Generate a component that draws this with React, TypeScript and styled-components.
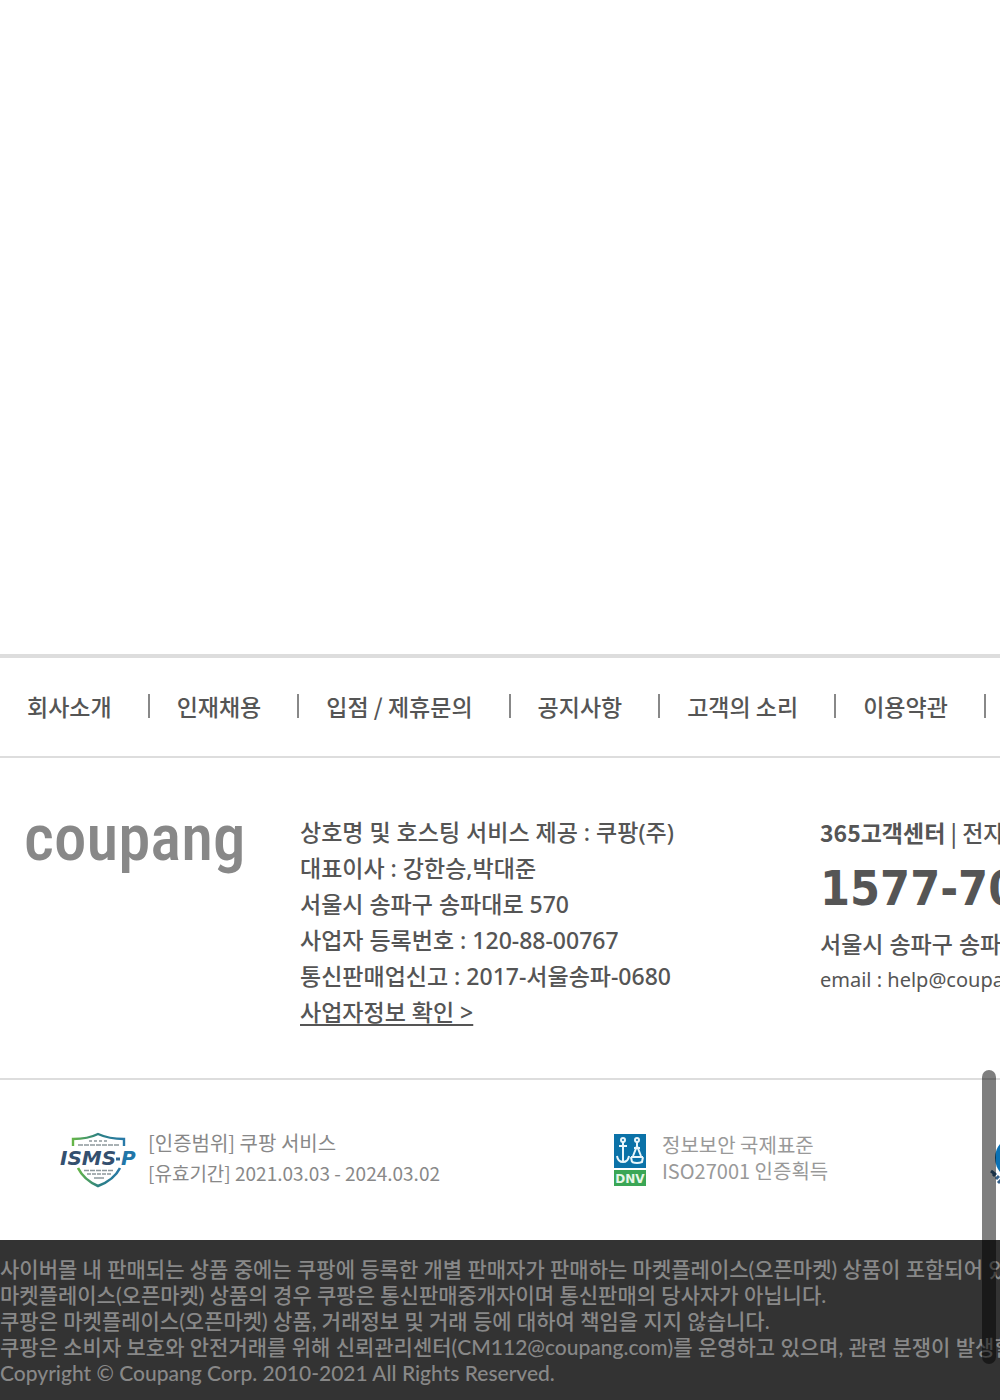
import React from 'react';
import styled, { createGlobalStyle } from 'styled-components';

const GlobalStyle = createGlobalStyle`
  * { box-sizing: border-box; }
  body {
    margin: 0;
    background: #fff;
    color: #555;
    font-family: "Noto Sans", "Noto Sans CJK KR", sans-serif;
    font-size: 23px;
    font-weight: 500;
    line-height: 36px;
  }
  a { color: inherit; text-decoration: none; }
  ul, p, address { margin: 0; padding: 0; font-style: normal; }
`;

const Page = styled.div`
  display: flex;
  flex-direction: column;
  min-height: 100vh;
  overflow: hidden;
  white-space: nowrap;
`;

const Content = styled.main`
  flex: 1;
`;

const Footer = styled.footer`
  border-top: 4px solid #ddd;
`;

const Nav = styled.nav`
  padding: 30px 0 32px;
  border-bottom: 2px solid #ddd;
  font-family: "Noto Sans CJK KR", sans-serif;
`;

const NavList = styled.ul`
  display: flex;
  list-style: none;
`;

const NavItem = styled.li`
  display: flex;
  flex: none;
  align-items: center;
  padding-left: 27px;

  &:not(:last-child)::after {
    content: "";
    width: 2px;
    height: 24px;
    margin-left: 36px;
    background: #888;
  }
`;

const Info = styled.section`
  display: grid;
  grid-template-columns: 300px 520px 1fr;
  padding: 56px 0 48px;
  border-bottom: 2px solid #ddd;
`;

const LogoLink = styled.a`
  display: block;
  padding-left: 24px;
`;

const Company = styled.address`
  a { text-decoration: underline; text-decoration-thickness: 2px; text-underline-offset: 3px; }
`;

const ContactTitle = styled.p`
  font-family: "Noto Sans CJK KR", sans-serif;
`;

const Phone = styled.strong`
  display: block;
  font: bold 48px/76px "DejaVu Sans Condensed", "DejaVu Sans", sans-serif;
`;

const Email = styled.a`
  display: block;
  font-size: 20px;
  font-weight: 400;
`;

const Certs = styled.section`
  display: grid;
  grid-template-columns: 554px 376px auto;
  align-items: center;
  height: 160px;
  padding-left: 60px;
`;

const Cert = styled.div<{ $gap: number }>`
  display: flex;
  align-items: center;
  gap: ${(p) => p.$gap}px;
`;

const CertText = styled.div<{ $line: number; $color: string }>`
  padding-bottom: 4px;
  font-family: "Noto Sans CJK KR", sans-serif;
  font-size: 20px;
  font-weight: 400;
  line-height: ${(p) => p.$line}px;
  color: ${(p) => p.$color};
`;

const Period = styled.p`
  font-size: 19px;
`;

const Legal = styled.section`
  padding: 16px 0 14px;
  background: #333;
  color: #888;
  font-family: Lato, "Noto Sans CJK KR", sans-serif;
  font-size: 21px;
  line-height: 26px;
`;

const ScrollThumb = styled.div`
  position: fixed;
  right: 4px;
  bottom: 36px;
  width: 14px;
  height: 21vh;
  border-radius: 7px;
  background: rgba(0, 0, 0, 0.5);
`;

const navLinks = ['회사소개', '인재채용', '입점 / 제휴문의', '공지사항', '고객의 소리', '이용약관', '개인정보 처리방침'];

const companyLines = [
  '상호명 및 호스팅 서비스 제공 : 쿠팡(주)',
  '대표이사 : 강한승,박대준',
  '서울시 송파구 송파대로 570',
  '사업자 등록번호 : 120-88-00767',
  '통신판매업신고 : 2017-서울송파-0680',
];

const legalLines = [
  '사이버몰 내 판매되는 상품 중에는 쿠팡에 등록한 개별 판매자가 판매하는 마켓플레이스(오픈마켓) 상품이 포함되어 있습니다.',
  '마켓플레이스(오픈마켓) 상품의 경우 쿠팡은 통신판매중개자이며 통신판매의 당사자가 아닙니다.',
  '쿠팡은 마켓플레이스(오픈마켓) 상품, 거래정보 및 거래 등에 대하여 책임을 지지 않습니다.',
  '쿠팡은 소비자 보호와 안전거래를 위해 신뢰관리센터(CM112@coupang.com)를 운영하고 있으며, 관련 분쟁이 발생할 경우 별도의 분쟁 처리절차에 의거 분쟁이 처리됩니다.',
  'Copyright © Coupang Corp. 2010-2021 All Rights Reserved.',
];

const CoupangLogo = () => (
  <svg width="230" height="64" viewBox="0 0 230 64" role="img" aria-label="coupang">
    <text x="0" y="46" fontFamily="'Roboto Condensed', Roboto, sans-serif" fontSize="65" fontWeight="500" fill="#888">coupang</text>
  </svg>
);

const IsmsMark = () => (
  <svg width="78" height="56" viewBox="0 0 78 56" role="img" aria-label="ISMS-P">
    <defs>
      <linearGradient id="shield">
        <stop offset="0" stopColor="#65b548" />
        <stop offset="0.5" stopColor="#2c8083" />
        <stop offset="1" stopColor="#2879a8" />
      </linearGradient>
    </defs>
    <path d="M13 14V7Q28 7 38 2Q49 7 64 7V14" fill="none" stroke="url(#shield)" strokeWidth="2.4" />
    <path d="M18 36Q24 48 38 54Q54 48 60 36" fill="none" stroke="url(#shield)" strokeWidth="2.6" />
    <g stroke="#8d989c" strokeWidth="1.5">
      <path d="M29 9H49" strokeDasharray="3 2" />
      <path d="M18 13H59" strokeDasharray="5 1" />
      <path d="M24 38.5H54" strokeDasharray="5 1" />
      <path d="M27 42H51" strokeDasharray="4 1" />
      <path d="M34 46H44" />
    </g>
    <text y="33" fontFamily="'DejaVu Sans', sans-serif" fontSize="20" fontWeight="700" fontStyle="italic" fill="#34506f">
      <tspan x="0">ISMS</tspan>
      <tspan x="61" fill="#2176a8">P</tspan>
    </text>
    <path d="M56 27H60" stroke="#2c6590" strokeWidth="3" />
  </svg>
);

const DnvMark = () => (
  <svg width="32" height="52" viewBox="0 0 32 52" role="img" aria-label="DNV">
    <rect width="32" height="34" fill="#0b72a8" />
    <rect y="36" width="32" height="16" fill="#3aa655" />
    <g fill="none" stroke="#eaf6fb" strokeWidth="2">
      <circle cx="9" cy="6" r="2" />
      <path d="M9 8V28M5 12H13M3 22Q4 28 9 28Q14 28 15 22" />
      <circle cx="23" cy="6" r="2" />
      <path d="M23 8V14M19 22L23 12L27 22M17 23H29M18 28Q23 30 28 28L29 23M17 23L18 28M20 14H26" />
    </g>
    <text x="16" y="49" textAnchor="middle" fontFamily="'DejaVu Sans', sans-serif" fontSize="12" fontWeight="700" fill="#e6f6e8">DNV</text>
  </svg>
);

const GlobeMark = () => (
  <svg width="56" height="56" viewBox="0 0 56 56" aria-hidden="true">
    <circle cx="27" cy="26" r="22" fill="#0b72b5" />
    <path d="M1 39L5 42M3 44L6 41M6 47L9 44M8 51L11 48" fill="none" stroke="#34618c" strokeWidth="3" />
  </svg>
);

export default function App() {
  return (
    <>
      <GlobalStyle />
      <Page>
        <Content />
        <Footer>
          <Nav>
            <NavList>
              {navLinks.map((label) => (
                <NavItem key={label}><a href="#">{label}</a></NavItem>
              ))}
            </NavList>
          </Nav>
          <Info>
            <LogoLink href="#"><CoupangLogo /></LogoLink>
            <Company>
              {companyLines.map((line) => <p key={line}>{line}</p>)}
              <a href="#">사업자정보 확인 &gt;</a>
            </Company>
            <address>
              <ContactTitle><strong>365고객센터</strong> | 전자금융거래분쟁처리담당</ContactTitle>
              <Phone>1577-7011</Phone>
              <p>서울시 송파구 송파대로 570</p>
              <Email href="#">email : help@coupang.com</Email>
            </address>
          </Info>
          <Certs>
            <Cert $gap={10}>
              <IsmsMark />
              <CertText $line={30} $color="#888">
                <p>[인증범위] 쿠팡 서비스</p>
                <Period>[유효기간] 2021.03.03 - 2024.03.02</Period>
              </CertText>
            </Cert>
            <Cert $gap={16}>
              <DnvMark />
              <CertText $line={26} $color="#999">
                <p>정보보안 국제표준</p>
                <p>ISO27001 인증획득</p>
              </CertText>
            </Cert>
            <Cert $gap={10}><GlobeMark /></Cert>
          </Certs>
          <Legal>
            {legalLines.map((line) => <p key={line}>{line}</p>)}
          </Legal>
        </Footer>
      </Page>
      <ScrollThumb />
    </>
  );
}
